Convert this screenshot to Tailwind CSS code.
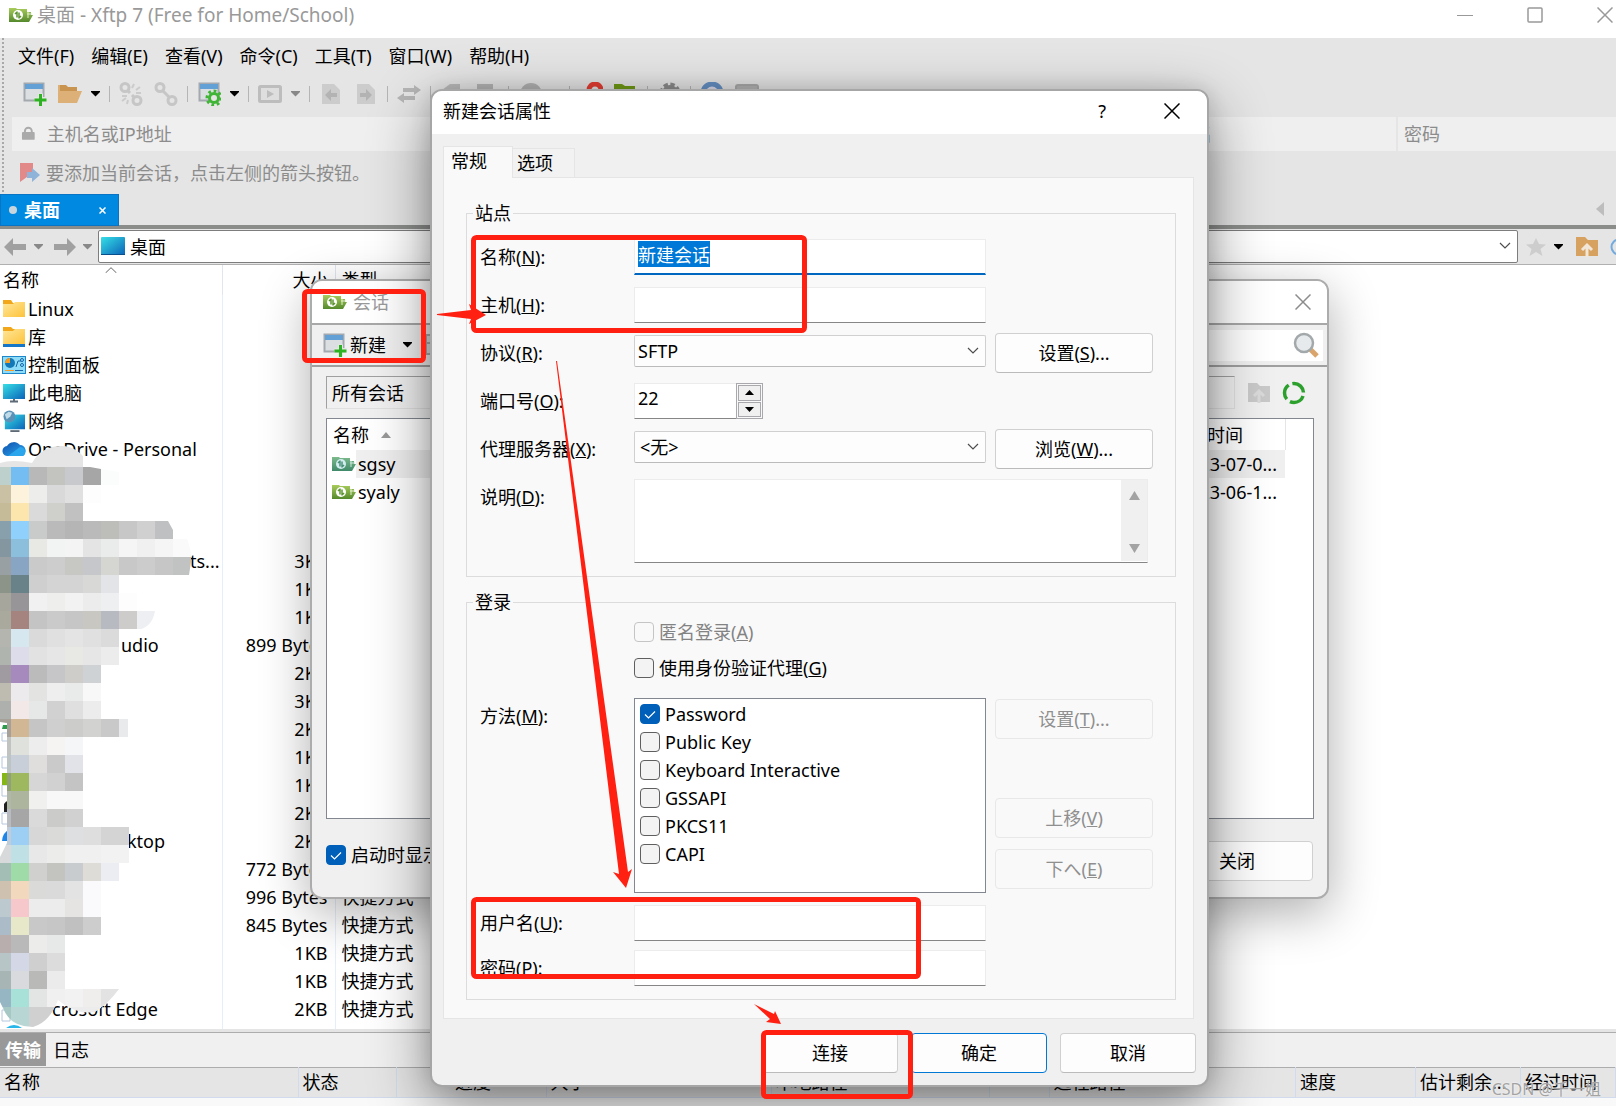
<!DOCTYPE html>
<html lang="zh-CN">
<head>
<meta charset="utf-8">
<title>桌面 - Xftp 7 (Free for Home/School)</title>
<script src="https://cdn.jsdelivr.net/npm/@tailwindcss/browser@4"></script>
</head>
<body class="relative h-screen overflow-hidden bg-[#e5e5e5] text-[18px] leading-6 text-black font-['Noto_Sans','Noto_Sans_CJK_SC',sans-serif]">

<!-- shared icons -->
<svg class="absolute h-0 w-0" aria-hidden="true">
  <defs>
    <linearGradient id="gGreen" x1="0" y1="0" x2="0" y2="1"><stop offset="0" stop-color="#a9cc5c"/><stop offset="1" stop-color="#54892b"/></linearGradient>
    <linearGradient id="gTeal" x1="0" y1="0" x2="0" y2="1"><stop offset="0" stop-color="#7dbb8c"/><stop offset="1" stop-color="#3f8a6a"/></linearGradient>
    <linearGradient id="gYellow" x1="0" y1="0" x2="1" y2="1"><stop offset="0" stop-color="#ffe79a"/><stop offset="1" stop-color="#fdc33b"/></linearGradient>
    <linearGradient id="gBlue" x1="0" y1="0" x2="1" y2="1"><stop offset="0" stop-color="#35dfe6"/><stop offset="1" stop-color="#0b63b8"/></linearGradient>
    <linearGradient id="gCloud" x1="0" y1="0" x2="1" y2="1"><stop offset="0" stop-color="#0f4fae"/><stop offset="1" stop-color="#2aa9ee"/></linearGradient>
  </defs>
  <symbol id="i-xftp" viewBox="0 0 24 16"><path d="M0 1h7l1 1h10v3h4v3h2l-4 7H0z" fill="url(#gGreen)"/><circle cx="9" cy="8" r="5" fill="#fff"/><path d="M8 4.500v6M8 5l-2 2M10 11.500v-6M10 11l2-2" stroke="#5d9431" stroke-width="1.500" fill="none"/><path d="M19 5v6M18 7h5" stroke="#e4f0cf" stroke-width="1"/></symbol>
  <symbol id="i-xftp-on" viewBox="0 0 24 16"><path d="M0 1h7l1 1h10v3h4v3h2l-4 7H0z" fill="url(#gTeal)"/><circle cx="9" cy="8" r="5" fill="#d3edf0"/><path d="M8 4.500v6M8 5l-2 2M10 11.500v-6M10 11l2-2" stroke="#4c9278" stroke-width="1.500" fill="none"/><path d="M19 5v6M18 7h5" stroke="#cfe8df" stroke-width="1"/></symbol>
  <symbol id="i-new" viewBox="0 0 24 24"><rect x="1.500" y="1.500" width="19" height="17" fill="#dcdfe2" stroke="#a3a9ae" stroke-width="2"/><rect x="2" y="2" width="18" height="5" fill="#62a0d6"/><path d="M17.500 11.500v12M11.500 17.500h12" stroke="#e5e5e5" stroke-width="5"/><path d="M17.500 12v12M11.500 18h12" stroke="#2db321" stroke-width="3"/></symbol>
  <symbol id="i-open" viewBox="0 0 24 24"><path d="M0 3h8l2 2h9v5H0z" fill="#c99450"/><path d="M0 21V3h2v6h22l-5 12z" fill="#dcb076"/></symbol>
  <symbol id="i-caret" viewBox="0 0 9 6"><path d="M0 0h9v1L4.500 5.500 0 1z" fill="currentColor"/></symbol>
  <symbol id="i-unlink" viewBox="0 0 24 24"><g fill="none" stroke="#c6c6c6" stroke-width="3"><circle cx="6" cy="5.500" r="4"/><circle cx="18" cy="18.500" r="4"/><path d="M8 8l3 3M13 13l3 3"/></g><path d="M13 6l2-4M17 8l4-3M17 11h5M3 14h5M3 19l4-3M8 22l1-4" stroke="#cbcbcb" stroke-width="2"/></symbol>
  <symbol id="i-link" viewBox="0 0 24 24"><g fill="none" stroke="#c6c6c6" stroke-width="3"><circle cx="6" cy="5.500" r="4"/><circle cx="18" cy="18.500" r="4"/><path d="M8 8l8 8"/></g></symbol>
  <symbol id="i-prop" viewBox="0 0 24 24"><rect x="2.500" y="1.500" width="19" height="17" fill="#dcdfe2" stroke="#a3a9ae" stroke-width="2"/><rect x="3" y="2" width="18" height="5" fill="#62a0d6"/><circle cx="17" cy="16" r="7" fill="none" stroke="#3fb535" stroke-width="3" stroke-dasharray="2.700 2.700"/><circle cx="17" cy="16" r="4.500" fill="#e5e5e5" stroke="#3fb535" stroke-width="3"/></symbol>
  <symbol id="i-play" viewBox="0 0 24 24"><rect x="1.500" y="4.500" width="21" height="15" rx="1" fill="#dedede" stroke="#bdbdbd" stroke-width="3"/><path d="M9 8v8l7-4z" fill="#bdbdbd"/></symbol>
  <symbol id="i-docl" viewBox="0 0 24 24"><path d="M3 2h12l6 6v14H3z" fill="#cccccc"/><path d="M6 13l6-6v4h6v4h-6v4z" fill="#b3b3b3"/></symbol>
  <symbol id="i-docr" viewBox="0 0 24 24"><path d="M3 2h12l6 6v14H3z" fill="#cccccc"/><path d="M18 13l-6-6v4H6v4h6v4z" fill="#b3b3b3"/></symbol>
  <symbol id="i-swap" viewBox="0 0 24 24"><path d="M6 6h11V3l7 5-7 5v-3H6zM18 14H7v-3l-7 5 7 5v-3h11z" fill="#b5b5b5"/></symbol>
  <symbol id="i-folderup" viewBox="0 0 24 24"><path d="M1 2h9l3 3h10v16H1z" fill="currentColor"/><path d="M12 22v-12M7 15l5-5 5 5" stroke="#f2e6d8" stroke-width="3" fill="none"/></symbol>
  <symbol id="i-folderup-off" viewBox="0 0 24 24"><path d="M1 2h9l3 3h10v16H1z" fill="#c9c9c9"/><path d="M12 22v-12M7 15l5-5 5 5" stroke="#dadada" stroke-width="3" fill="none"/></symbol>
  <symbol id="i-folder" viewBox="0 0 24 20"><path d="M1 1h8l2 3h12v13H1z" fill="#f2a71b"/><path d="M1 5h10l2-2h10v15H1z" fill="url(#gYellow)"/></symbol>
  <symbol id="i-lib" viewBox="0 0 24 20"><path d="M1 0h8l2 2h12v13H1z" fill="#f2a71b"/><path d="M1 4h10l2-2h10v15H1z" fill="url(#gYellow)"/><path d="M1 17h22v3H1z" fill="#1676c8"/></symbol>
  <symbol id="i-panel" viewBox="0 0 24 20"><rect x=".500" y="1.500" width="23" height="17" fill="#8fdcf8" stroke="#1d87c9"/><circle cx="8" cy="8" r="5" fill="#1477b8"/><path d="M8 8V3a5 5 0 0 0-5 5z" fill="#f59a23"/><path d="M14 12l2-6h3" stroke="#1565a8" fill="none"/><circle cx="20" cy="5" r="1.500" fill="none" stroke="#1565a8"/><circle cx="20" cy="10" r="1.500" fill="none" stroke="#1565a8"/><path d="M3 15.500h9" stroke="#f59a23"/><path d="M13 15.500h8" stroke="#1565a8"/></symbol>
  <symbol id="i-pc" viewBox="0 0 24 20"><rect x="1" y="1" width="22" height="15" fill="url(#gBlue)"/><path d="M8 18.500h8M12 16v2" stroke="#5d6a75" stroke-width="2"/></symbol>
  <symbol id="i-net" viewBox="0 0 24 24"><rect x="2" y="5" width="22" height="16" fill="url(#gBlue)"/><path d="M8 23h10" stroke="#5d6a75" stroke-width="2"/><circle cx="7" cy="7" r="6.500" fill="#5b93b8"/><path d="M2 5l4-3 4 1-2 4-4 3z" fill="#c2dbe8"/></symbol>
  <symbol id="i-cloud" viewBox="0 0 24 18"><path d="M6 16a5 5 0 0 1-1-10 8 8 0 0 1 13-1 6 6 0 0 1 3 11z" fill="url(#gCloud)"/><path d="M6 16l12-9a5 5 0 0 1 3 9z" fill="#2ba6ec"/></symbol>
  <symbol id="i-desktop" viewBox="0 0 24 18"><rect width="24" height="18" rx="1" fill="url(#gBlue)"/><path d="M0 17.500h24" stroke="#084f8c"/></symbol>
  <symbol id="i-chev" viewBox="0 0 12 8"><path d="M1 1l5 5 5-5" fill="none" stroke="#4d4d4d" stroke-width="1.200"/></symbol>
  <symbol id="i-tick" viewBox="0 0 20 20"><path d="M5 10.500l3.500 3.500L15 7.500" fill="none" stroke="#fff" stroke-width="1.200"/></symbol>
  <symbol id="i-x" viewBox="0 0 16 16"><path d="M.500 .500l15 15M15.500 .500l-15 15" stroke="currentColor" stroke-width="1.500"/></symbol>
</svg>

<main class="flex h-full flex-col">
  <header class="flex h-[38px] shrink-0 items-center bg-white pb-2 pl-[9px] text-[#999]">
    <svg class="mr-1 h-4 w-6"><use href="#i-xftp"/></svg>
    <h1 class="flex-1 text-[19px] whitespace-nowrap">桌面 - Xftp 7 (Free for Home/School)</h1>
    <div class="flex items-center gap-[54px] pr-[3px]">
      <button aria-label="最小化"><svg class="h-4 w-4" viewBox="0 0 16 16"><path d="M0 8.500h16" stroke="#999"/></svg></button>
      <button aria-label="最大化"><svg class="h-4 w-4" viewBox="0 0 16 16"><rect x="1" y="1" width="14" height="14" rx="1" fill="none" stroke="#999" stroke-width="1.500"/></svg></button>
      <button aria-label="关闭窗口"><svg class="h-4 w-4"><use href="#i-x"/></svg></button>
    </div>
  </header>

  <div class="flex shrink-0">
    <div class="ml-0.5 w-0.5 shrink-0 bg-[repeating-linear-gradient(#a8a8a8_0_2px,transparent_2px_4px)]"></div>
    <div class="min-w-0 flex-1">
      <nav class="flex h-[36px] items-center gap-[17px] pl-[14px]">
        <button>文件(F)</button><button>编辑(E)</button><button>查看(V)</button><button>命令(C)</button><button>工具(T)</button><button>窗口(W)</button><button>帮助(H)</button>
      </nav>
      <div class="flex h-[43px] items-center pb-1 pl-[10px]" role="toolbar" id="toolbar"></div>
      <div class="flex h-[34px] gap-0.5 pl-2">
        <label class="flex flex-1 items-center bg-[#efefef] pl-[9px]">
          <svg class="mr-[11px] h-4 w-[15px]" viewBox="0 0 15 16"><path d="M4 8V5a3.500 3.500 0 0 1 7 0v3" fill="none" stroke="#aaa" stroke-width="2"/><rect x="1" y="6" width="13" height="8" rx="1" fill="#aaa"/></svg>
          <input aria-label="主机名或IP地址" placeholder="主机名或IP地址" class="w-full bg-transparent outline-none placeholder:text-[#8c8c8c]">
        </label>
        <input aria-label="用户名" placeholder="用户名" class="w-[248px] bg-[#efefef] px-[10px] outline-none placeholder:text-[#8c8c8c]">
        <input aria-label="密码" placeholder="密码" class="w-[218px] bg-[#efefef] px-[6px] outline-none placeholder:text-[#8c8c8c]">
      </div>
      <div class="flex h-[43px] items-center gap-[6px] pl-4 text-[#8c8c8c]">
        <svg class="h-5 w-5" viewBox="0 0 20 20"><path d="M0 0h13v10l-6 4-7 5z" fill="#e28a8a"/><path d="M7 9h5V5l8 7-8 7v-4H7z" fill="#8fb3d9"/></svg>
        <p>要添加当前会话，点击左侧的箭头按钮。</p>
      </div>
    </div>
  </div>

  <div class="flex h-[35px] shrink-0 items-start justify-between border-b-4 border-[#8b8d8b]">
    <div class="flex h-8 w-[119px] items-center border border-[#0a74c4] bg-[#0089e0] pr-3 pl-2 font-bold text-white">
      <span class="mr-[7px] h-2 w-2 rounded-full bg-[#c9d5dd]"></span><span class="flex-1">桌面</span>
      <button aria-label="关闭标签"><svg class="h-[7px] w-[7px]" viewBox="0 0 7 7"><path d="M.500 .500l6 6M6.500 .500l-6 6" stroke="#fff" stroke-width="1.500"/></svg></button>
    </div>
    <button aria-label="向左滚动" class="mt-2 mr-3"><svg class="h-[14px] w-2" viewBox="0 0 8 14"><path d="M8 0v14L0 7z" fill="#bdbdbd"/></svg></button>
  </div>

  <div class="flex h-9 shrink-0 items-center border-b border-[#b0b0b0] text-[#a3a3a3]">
    <button aria-label="后退" class="ml-1"><svg class="h-[18px] w-[22px]" viewBox="0 0 22 18"><path d="M0 9l9-9v6h13v6H9v6z" fill="#a0a0a0"/></svg></button>
    <button aria-label="后退历史" class="ml-2 text-[#888]"><svg class="h-[6px] w-[9px]"><use href="#i-caret"/></svg></button>
    <button aria-label="前进" class="ml-[11px]"><svg class="h-[18px] w-[22px]" viewBox="0 0 22 18"><path d="M22 9l-9-9v6H0v6h13v6z" fill="#a0a0a0"/></svg></button>
    <button aria-label="前进历史" class="ml-[7px] text-[#888]"><svg class="h-[6px] w-[9px]"><use href="#i-caret"/></svg></button>
    <div class="relative ml-[6px] h-[33px] min-w-0 flex-1 text-black">
      <select aria-label="位置" class="h-full w-full appearance-none rounded-xs border border-[#7d7d7d] bg-white pl-[31px]"><option>桌面</option></select>
      <svg class="pointer-events-none absolute top-[7px] left-[3px] h-[18px] w-6"><use href="#i-desktop"/></svg>
      <svg class="pointer-events-none absolute top-3 right-[7px] h-2 w-3"><use href="#i-chev"/></svg>
    </div>
    <button aria-label="收藏" class="ml-2"><svg class="h-[18px] w-5" viewBox="0 0 20 18"><path d="M10 0l3 6 7 .500-5.500 4.500 2 7-6.500-4-6.500 4 2-7L0 6.500 7 6z" fill="#cdcdcd"/></svg></button>
    <button aria-label="收藏列表" class="ml-2 text-black"><svg class="h-[6px] w-[9px]"><use href="#i-caret"/></svg></button>
    <button aria-label="上一级" class="ml-3 text-[#d7a25f]"><svg class="h-6 w-6"><use href="#i-folderup"/></svg></button>
    <button aria-label="刷新" class="ml-[11px] w-[6px] overflow-hidden"><svg class="h-[18px] w-5" viewBox="0 0 20 18"><circle cx="9" cy="9" r="7.500" fill="none" stroke="#73abe0" stroke-width="2"/></svg></button>
  </div>

  <section class="relative min-h-0 flex-1 overflow-hidden bg-white">
    <table class="w-full table-fixed border-collapse">
      <colgroup><col class="w-[222px]"><col class="w-[113px]"><col></colgroup>
      <thead><tr class="h-[30px] text-left">
        <th class="border-r border-[#e0e6ee] pl-[3px] font-normal">名称</th>
        <th class="border-r border-[#e0e6ee] pr-[6px] text-right font-normal">大小</th>
        <th class="pl-[6px] font-normal">类型</th></tr></thead>
      <tbody id="files"></tbody>
    </table>
    <svg class="absolute top-[2px] left-[105px] h-[6px] w-3" viewBox="0 0 12 6"><path d="M.500 6L6 .700 11.500 6" fill="none" stroke="#666"/></svg>
    <svg class="absolute top-0 left-0 h-[763px] w-[230px]" viewBox="0 265 230 763" aria-hidden="true">
      <defs><clipPath id="blot"><path d="M0 463Q12 459 32 463Q42 446 61 446Q80 446 90 467L101 469L119 472V485H101V521L168 521L173 530V539H187Q192 551 191 562L189 575H155V611Q152 628 137 630Q122 629 121 634L123 665H128V737H90V827H129V863H119V881H101V989H119Q108 1004 95 1012Q75 1015 58 1000Q50 1022 33 1027Q10 1027 3 1008L0 1002V857L7 843V723L0 722Z"/></clipPath></defs>
      <path d="M2 733h8v8H2zM2 757h8v11H2zM2 785h8v11H2zM2 813h8v11H2zM2 1010h8v11H2z" fill="#fff" stroke="#b5c8dc"/>
      <path d="M2 773h8v12H2z" fill="#84b716"/><path d="M2 841a14 14 0 0 1 8-12v12z" fill="#1d86e8"/><path d="M3 725h5v4H2z" fill="#2a9c4c"/><path d="M4 812v-8q4-6 6 0v8z" fill="#222"/><path d="M6 1028q8-6 16 0z" fill="#29b6e8"/>
      <g id="mosaic" clip-path="url(#blot)" shape-rendering="crispEdges"></g>
    </svg>
  </section>

  <footer class="shrink-0 border-t-[3px] border-[#e5e5e5] bg-[#f9f9f9]">
    <div class="flex h-[35px] border-t border-[#adadad] bg-[#f0f0f0] pb-px" role="tablist">
      <button role="tab" aria-selected="true" class="w-[46px] bg-[#999] font-bold text-white">传输</button>
      <button role="tab" class="pl-[7px]">日志</button>
    </div>
    <table class="w-full table-fixed border-collapse border-y border-t-[#adadad] border-b-[#d0dced] bg-[#e5e5e5]">
      <colgroup><col class="w-[298px]"><col class="w-[98px]"><col class="w-[150px]"><col class="w-[225px]"><col class="w-[218px]"><col class="w-[60px]"><col><col class="w-[120px]"><col class="w-[105px]"><col class="w-[95px]"></colgroup>
      <thead><tr class="h-[30px] text-left whitespace-nowrap [&>th]:border-r [&>th]:border-[#d0dced] [&>th]:pb-px [&>th]:pl-1 [&>th]:font-normal">
        <th>名称</th><th>状态</th><th class="text-center">进度</th><th>大小</th><th>本地路径</th><th class="text-center">&lt;-&gt;</th><th>远程路径</th><th>速度</th><th>估计剩余...</th><th>经过时间</th></tr></thead>
    </table>
    <div class="h-2"></div>
  </footer>
</main>

<!-- session manager window -->
<section role="dialog" aria-label="会话" class="absolute top-[279px] left-[310px] flex w-[1019px] flex-col overflow-hidden rounded-xl border-2 border-[#acacac] bg-[#f0f0f0] shadow-[0_14px_50px_rgba(0,0,0,0.32)]">
  <header class="flex h-11 items-center border-b-2 border-[#a8a8a8] bg-white pr-4 pb-px pl-[11px] text-[#999]">
    <svg class="mr-[6px] h-4 w-6"><use href="#i-xftp"/></svg><h2 class="flex-1">会话</h2>
    <button aria-label="关闭会话" class="text-[#8c8c8c]"><svg class="h-4 w-4"><use href="#i-x"/></svg></button>
  </header>
  <div class="flex h-[42px] items-center border-b-2 border-[#a0a0a0] pr-1 pl-[11px]" role="toolbar">
    <button class="flex items-center gap-[3px]"><svg class="h-6 w-6"><use href="#i-new"/></svg>新建<svg class="ml-[13px] h-[6px] w-[11px]"><use href="#i-caret"/></svg></button>
    <svg class="ml-3 h-6 w-6" viewBox="0 0 24 24"><rect x="1" y="2" width="20" height="19" fill="#ddd" stroke="#aaa" stroke-width="2"/><path d="M1 10h20" stroke="#aaa" stroke-width="2"/></svg>
    <span class="flex-1"></span>
    <label class="flex h-[31px] w-[300px] items-center bg-white pr-1">
      <input aria-label="搜索会话" class="min-w-0 flex-1 outline-none">
      <svg class="h-[26px] w-[26px]" viewBox="0 0 26 26"><path d="M17 17l7 7" stroke="#d9a56c" stroke-width="5"/><circle cx="11" cy="11" r="9" fill="#e6eaec" stroke="#a3a8ab" stroke-width="2.500"/></svg>
    </label>
  </div>
  <div class="flex items-center pt-[9px] pl-[14px]">
    <div class="flex h-[33px] w-[909px] items-center border border-[#e0e0e0] border-t-[#a0a0a0] border-l-[#a0a0a0] pl-[5px]">所有会话</div>
    <button aria-label="上一级文件夹" class="ml-3"><svg class="h-6 w-6"><use href="#i-folderup-off"/></svg></button>
    <button aria-label="刷新列表" class="ml-[11px]"><svg class="h-6 w-6" viewBox="0 0 24 24"><circle cx="12" cy="12" r="9.500" fill="none" stroke="#2ca02c" stroke-width="3.500" stroke-dasharray="16 3.900" stroke-dashoffset="-3"/></svg></button>
  </div>
  <div class="mt-[9px] mr-[13px] ml-[14px] h-[401px] border border-[#828790] bg-white">
    <table class="w-[958px] table-fixed border-collapse text-left whitespace-nowrap">
      <colgroup><col class="w-[838px]"><col class="w-[120px]"></colgroup>
      <thead><tr class="h-[31px]"><th class="pl-[6px] font-normal"><span class="flex items-center gap-3">名称<svg class="h-[6px] w-[10px]" viewBox="0 0 10 6"><path d="M5 0l5 6H0z" fill="#999"/></svg></span></th><th class="border-r border-[#e5e5e5] pl-[6px] font-normal">修改时间</th></tr></thead>
      <tbody>
        <tr class="h-7"><td class="bg-[linear-gradient(90deg,transparent_29px,#efefef_29px)] pl-[5px]"><span class="flex items-center gap-[2px]"><svg class="h-4 w-6"><use href="#i-xftp-on"/></svg>sgsy</span></td><td class="bg-[#efefef] pr-2 text-right">2023-07-0...</td></tr>
        <tr class="h-7"><td class="pl-[5px]"><span class="flex items-center gap-[2px]"><svg class="h-4 w-6"><use href="#i-xftp"/></svg>syaly</span></td><td class="pr-2 text-right">2023-06-1...</td></tr>
      </tbody>
    </table>
  </div>
  <div class="flex items-start justify-between pt-[22px] pr-[14px] pb-4 pl-[14px]">
    <label class="flex h-7 items-center gap-[5px]"><span class="relative h-5 w-5"><input type="checkbox" checked class="peer block h-5 w-5 appearance-none rounded border border-[#5f5f5f] bg-[#f3f3f3] checked:border-[#005fb8] checked:bg-[#005fb8]"><svg class="pointer-events-none absolute inset-0 hidden h-5 w-5 peer-checked:block"><use href="#i-tick"/></svg></span>启动时显示</label>
    <button class="h-10 w-[152px] rounded border border-[#d0d0d0] bg-[#fdfdfd]">关闭</button>
  </div>
</section>

<!-- new session properties window -->
<section role="dialog" aria-label="新建会话属性" class="absolute top-[89px] left-[430px] w-[779px] overflow-hidden rounded-xl border-2 border-[#a6a6a6] bg-[#f0f0f0] shadow-[0_20px_60px_rgba(0,0,0,0.45),0_0_20px_rgba(0,0,0,0.12)]">
  <header class="flex h-[43px] items-center bg-white pr-[27px] pb-[3px] pl-[11px]">
    <h2 class="flex-1">新建会话属性</h2>
    <button aria-label="帮助" class="mr-[58px]">?</button>
    <button aria-label="关闭"><svg class="h-4 w-4"><use href="#i-x"/></svg></button>
  </header>
  <form class="pt-3 pr-[11px] pb-3 pl-[11px]" onsubmit="return false">
    <div class="relative z-10 -mb-px flex items-end" role="tablist">
      <button type="button" role="tab" aria-selected="true" class="flex h-8 w-[70px] items-start border border-b-0 border-[#e5e5e5] bg-[#f9f9f9] pt-[2px] pl-[7px]">常规</button>
      <button type="button" role="tab" class="mb-px h-[29px] w-[62px] border border-b-0 border-l-0 border-[#e5e5e5] bg-[#f2f2f2] pl-1 text-left leading-7">选项</button>
    </div>
    <div class="mr-0.5 border border-[#e5e5e5] bg-[#f9f9f9] pt-[23px] pr-[17px] pb-[18px] pl-[22px]">
      <fieldset class="min-w-0 border border-[#dcdcdc] pt-2 pb-[13px] pl-[13px]">
        <legend class="-ml-[7px] px-[2px]">站点</legend>
        <div class="grid auto-rows-[48px] grid-cols-[154px_352px_158px] [&>label]:pt-3">
          <label for="name">名称(<u>N</u>):</label>
          <div class="col-span-2 pt-[6px]"><input id="name" value="新建会话" class="h-9 w-[352px] border border-b-2 border-[#ececec] border-b-[#0067c0] bg-white px-[3px] pb-[6px] outline-none selection:bg-[#0078d7] selection:text-white"></div>
          <label for="host">主机(<u>H</u>):</label>
          <div class="col-span-2 pt-[6px]"><input id="host" class="h-9 w-[352px] border border-[#ececec] border-b-[#868686] bg-white px-[3px] pb-[6px] outline-none"></div>
          <label for="proto">协议(<u>R</u>):</label>
          <div class="pt-[6px]"><div class="relative"><select id="proto" class="h-8 w-full appearance-none rounded-xs border border-[#d0d0d0] border-b-[#bbb] bg-[#fdfdfd] pl-[3px]"><option>SFTP</option></select><svg class="pointer-events-none absolute top-3 right-[7px] h-2 w-3"><use href="#i-chev"/></svg></div></div>
          <div class="-mr-[9px] pt-1 pl-[9px]"><button type="button" class="h-10 w-full rounded border border-[#d0d0d0] border-b-[#bbb] bg-[#fdfdfd]">设置(<u>S</u>)...</button></div>
          <label for="port">端口号(<u>O</u>):</label>
          <div class="col-span-2 flex pt-[6px]">
            <input id="port" value="22" class="h-9 w-[102px] border border-r-0 border-[#ececec] border-b-[#868686] bg-white px-[3px] pb-[6px] outline-none">
            <div class="flex h-9 w-[27px] flex-col gap-px border border-[#a9a9ad] bg-[#f9f9f9] p-px">
              <button type="button" aria-label="增加" class="grid flex-1 place-items-center border border-[#a9a9ad] bg-[#f0f0f0]"><svg class="h-[5px] w-[9px]" viewBox="0 0 9 5"><path d="M4.500 0L9 5H0z"/></svg></button>
              <button type="button" aria-label="减少" class="grid flex-1 place-items-center border border-[#a9a9ad] bg-[#f0f0f0]"><svg class="h-[5px] w-[9px]" viewBox="0 0 9 5"><path d="M4.500 5L9 0H0z"/></svg></button>
            </div>
          </div>
          <label for="proxy">代理服务器(<u>X</u>):</label>
          <div class="pt-[6px]"><div class="relative"><select id="proxy" class="h-8 w-full appearance-none rounded-xs border border-[#d0d0d0] border-b-[#bbb] bg-[#fdfdfd] pl-[5px]"><option>&lt;无&gt;</option></select><svg class="pointer-events-none absolute top-3 right-[7px] h-2 w-3"><use href="#i-chev"/></svg></div></div>
          <div class="-mr-[9px] pt-1 pl-[9px]"><button type="button" class="h-10 w-full rounded border border-[#d0d0d0] border-b-[#bbb] bg-[#fdfdfd]">浏览(<u>W</u>)...</button></div>
        </div>
        <div class="grid grid-cols-[154px_514px]">
          <label for="desc" class="pt-3">说明(<u>D</u>):</label>
          <div class="mt-[6px] flex h-[84px] border border-[#ececec] border-b-[#868686] bg-white">
            <textarea id="desc" class="flex-1 resize-none outline-none"></textarea>
            <div class="mb-px flex w-[26px] flex-col items-center justify-between bg-[#f0f0f0] pt-[11px] pb-2">
              <svg class="h-[9px] w-[11px]" viewBox="0 0 11 9"><path d="M5.500 0L11 9H0z" fill="#a3a3a3"/></svg>
              <svg class="h-[9px] w-[11px]" viewBox="0 0 11 9"><path d="M5.500 9L11 0H0z" fill="#a3a3a3"/></svg>
            </div>
          </div>
        </div>
      </fieldset>

      <fieldset class="mt-[13px] min-w-0 border border-[#dcdcdc] pb-[13px] pl-[13px]">
        <legend class="-ml-[7px] px-[2px]">登录</legend>
        <div class="pl-[154px]">
          <label class="flex h-9 items-center gap-[5px] text-[#838383]"><input type="checkbox" disabled class="h-5 w-5 appearance-none rounded border border-[#c5c5c5] bg-[#f9f9f9]"><span>匿名登录(<u>A</u>)</span></label>
          <label class="flex h-9 items-center gap-[5px]"><input type="checkbox" class="h-5 w-5 appearance-none rounded border border-[#5f5f5f] bg-[#f3f3f3]"><span>使用身份验证代理(<u>G</u>)</span></label>
        </div>
        <div class="mt-3 grid grid-cols-[154px_352px_167px]">
          <span id="mlabel" class="pt-[6px]">方法(<u>M</u>):</span>
          <div role="group" aria-labelledby="mlabel" id="methods" class="h-[195px] border border-[#828790] bg-white pt-px pl-[5px]"></div>
          <div class="flex flex-col pt-px pl-[9px] text-[#8f8f8f]">
            <button type="button" disabled class="h-10 rounded border border-[#e8e8e8]">设置(<u>T</u>)...</button>
            <button type="button" disabled class="mt-[59px] h-10 rounded border border-[#e8e8e8]">上移(<u>V</u>)</button>
            <button type="button" disabled class="mt-[11px] h-10 rounded border border-[#e8e8e8]">下へ(<u>E</u>)</button>
          </div>
        </div>
        <div class="mt-3 grid grid-cols-[154px_352px] items-center gap-y-[9px]">
          <label for="user">用户名(<u>U</u>):</label><input id="user" class="h-9 border border-[#ececec] border-b-[#868686] bg-white px-[3px] pb-[6px] outline-none">
          <label for="pass">密码(<u>P</u>):</label><input id="pass" type="password" class="h-9 border border-[#ececec] border-b-[#868686] bg-white px-[3px] pb-[6px] outline-none">
        </div>
      </fieldset>
    </div>
    <div class="mt-[14px] flex justify-end gap-[13px]">
      <button type="button" class="h-10 w-[136px] rounded border border-[#d0d0d0] border-b-[#bbb] bg-[#fdfdfd]">连接</button>
      <button type="submit" class="h-10 w-[136px] rounded border border-[#0078d4] bg-[#fdfdfd]">确定</button>
      <button type="button" class="h-10 w-[136px] rounded border border-[#d0d0d0] border-b-[#bbb] bg-[#fdfdfd]">取消</button>
    </div>
  </form>
</section>

<!-- red call-outs -->
<svg class="pointer-events-none absolute inset-0 h-full w-full" aria-hidden="true">
  <g fill="none" stroke="#ff2012" stroke-width="5">
    <rect x="304.500" y="291.500" width="119" height="69" rx="3"/>
    <rect x="473.500" y="237.500" width="331" height="93" rx="3"/>
    <rect x="473.500" y="899.500" width="445" height="77" rx="3"/>
    <rect x="763.500" y="1032.500" width="147" height="64" rx="3"/>
  </g>
  <g fill="#ff2012">
    <path d="M437 314L471 310 469 304 486 315 469 324 471 319 437 315z"/>
    <path d="M556 361h1L628 872 632 869 626 888 613 872 619 874z"/>
    <path d="M754 1004L774 1014 775 1011 781 1024 766 1022 770 1019z"/>
  </g>
</svg>
<p class="absolute right-[15px] bottom-[5px] text-base whitespace-nowrap text-[#a3a3a3] [text-shadow:0_0_2px_#fff]">CSDN @千一姐</p>

<script>
const icon = (id, cls = 'h-6 w-6') => `<svg class="${cls}"><use href="#${id}"/></svg>`;
const raw = s => `<svg class="h-6 w-6" viewBox="0 0 24 24">${s}</svg>`;
const caret = (cls = 'text-black') => `<button aria-label="更多" class="-ml-[2px] ${cls}">${icon('i-caret', 'h-[6px] w-[9px]')}</button>`;
const btn = s => `<button>${s}</button>`;
const groups = [
  [btn(icon('i-new')), btn(icon('i-open')), caret()],
  [btn(icon('i-unlink')), btn(icon('i-link'))],
  [btn(icon('i-prop')), caret()],
  [btn(icon('i-play')), caret('text-[#888]')],
  [btn(icon('i-docl')), btn(icon('i-docr'))],
  [btn(icon('i-swap'))],
  [btn(raw('<path d="M2 8l8-6h10v20H4z" fill="#bbb"/>')), btn(raw('<path d="M2 2h16v20H2z" fill="#b5b5b5"/>'))],
  [btn(raw('<circle cx="13" cy="12" r="11" fill="#b3b3b3"/>')), caret()],
  [btn(raw('<circle cx="16" cy="8" r="6" fill="none" stroke="#e53d33" stroke-width="5"/>')), btn(raw('<path d="M0 2h8l3 2h10v17H0z" fill="#6f9a14"/><circle cx="11" cy="12" r="5" fill="#fff"/>'))],
  [btn(raw('<circle cx="13" cy="11" r="8" fill="none" stroke="#8c8c8c" stroke-width="5" stroke-dasharray="4 2.300"/><circle cx="13" cy="11" r="6" fill="none" stroke="#8c8c8c" stroke-width="4"/>'))],
  [btn(raw('<circle cx="12" cy="11" r="9" fill="#dde" stroke="#6590c4" stroke-width="5"/>')), btn(raw('<rect x="1" y="3" width="22" height="16" rx="2" fill="#b5b5b5" stroke="#aaa" stroke-width="2"/>'))]
];
document.getElementById('toolbar').innerHTML = groups.map((g, i) =>
  `<div class="${i ? "relative flex h-6 items-center gap-[11px] pr-[9px] pl-[10px] before:absolute before:left-0 before:h-4 before:w-px before:bg-[#b5b5b5]" : 'flex h-6 items-center gap-[11px] pr-[9px] pl-[9px]'}">${g.join('')}</div>`).join('');

const names = [['i-folder','Linux'],['i-lib','库'],['i-panel','控制面板'],['i-pc','此电脑'],['i-net','网络'],['i-cloud','OneDrive - Personal'],
  0,0,0,['','ts...','pl-[190px]'],0,0,['','udio','pl-[121px]'],0,0,0,0,0,0,['','ktop','pl-[127px]'],0,0,0,0,0,['','crosoft Edge','pl-[52px]']];
const sizes = ['3KB','1KB','1KB','899 Bytes','2KB','3KB','2KB','1KB','1KB','2KB','2KB','772 Bytes','996 Bytes','845 Bytes','1KB','1KB','2KB'];
document.getElementById('files').innerHTML = Array.from({length: 27}, (_, i) => {
  const n = names[i], s = sizes[i - 9] || '';
  const label = !n ? '' : n[0] ? `<span class="flex items-center gap-[2px] pl-[2px]">${icon(n[0], 'h-[22px] w-6')}${n[1]}</span>` : `<span class="block ${n[2]}">${n[1]}</span>`;
  return `<tr class="h-7 whitespace-nowrap"><td class="border-r border-[#e5effa]">${label}</td><td class="border-r border-[#e5effa] pr-[7px] text-right">${s}</td><td class="pl-[6px]">${s && '快捷方式'}</td></tr>`;
}).join('');

document.getElementById('methods').innerHTML = ['Password','Public Key','Keyboard Interactive','GSSAPI','PKCS11','CAPI'].map((m, i) =>
  `<label class="flex h-7 items-center gap-[5px]"><span class="relative h-5 w-5"><input type="checkbox" ${i ? '' : 'checked'} class="peer block h-5 w-5 appearance-none rounded border border-[#5f5f5f] bg-[#f3f3f3] checked:border-[#005fb8] checked:bg-[#005fb8]"><svg class="pointer-events-none absolute inset-0 hidden h-5 w-5 peer-checked:block"><use href="#i-tick"/></svg></span>${m}</label>`).join('');

const cells = `e5e5e5 e5e5e5 e5e5e5 e5e5e5 e5e5e5
bdd0cb 73bdf2 b8b8b8 c3c3bf c8c9cc a6a6a6 fafdfc
cac1a4 fdf2dc ededec d9d9d9 e0e0e0 fdfdfd
c5bb98 fde6ae dadada cfcfcc c1c1c1
87a0ab 8fd0fc c9cbca bababa b5b5b5 bababa bdbdb9 c7c7c7 d0d0d0 bfc0c2
8496a0 8cbfdc e8e8e5 f1f4f3 f4f4f4 e4e4e4 eaecec f5f5f5 f0f0f0 f5f5f5 fafafa
99a0a3 89a5c4 cacacb cdcdcd c7c8c4 c6c7cb d5d6d2 c8c8c8 cccccc c6c6c6 c1c3c2
8c9389 69828a cfcfd0 d4d4d4 d4d4d4 d8d8d7 e3e4e7
a6a69c 979597 f0f1f0 eeeeec f2f2f2 ececec eeeff1 fdfdfd
aaa99d a58480 c4c4c4 cacaca c6c6c6 c8c7c2 b7bac1 cdccca eeeff2
b3b5ae d7e7ef dadada e0e0e0 e4e4e4 e0e0e0 dbdbdb
b0b4ae dddcea e2e2e2 e6e6e6 e8e8e5 e6e6e6 ececec
a09ba0 a78abd bbbbbb c6c6c8 cecdca cfd2d4
bebbb0 eceaec e3e3e1 eeeeee e9ebea f8f8f8
aeb0ad f2e8e7 e5e8e7 d1d1d1 dfdfdf ececec
a5a098 d2b794 c5c5c5 cfcfcf ccccca d2d2d0 c9c9c9 e8eaec
c0c3bf dfe1dc ededed f6f4f2 f5f6f8
bcc4c4 c8cfd9 dfdedc cacaca e2e3e8
8fa07a 9eb85f d6d6d6 d1d1d1 c4c4c4
b0b8a8 aeb59e f0f0ee f8f8f8 f8f8f8
b8bcc0 a6a6a6 dadada cbcbca d1d1d1
c0ccd8 9dcef4 d7d7d7 dadad8 dddfe0 dedede d4d4d4 d4d4d4
d7d9da bfe1e6 e8e8e8 ececea f0f0f0 f0f0f0 f2f2f2 f2f2f2
a3bfb5 9edba8 d0d0ce c3c4c0 c9cccf dddcd7 ecedf2
cfc1b0 f2d8bd dadbd8 d9dad9 e3e3e3 fafafc
bccad0 f6c8cc ececec ececec e5e4e2 fafafc
abbcc8 e6e8c9 c8c8c8 c6c6c6 c0c0c0 cccdcc
b8aeae b8b9b8 ececea e6e9e8
b7c5c7 d4d7e6 cfcfcf dcdcdc
a7b5b4 d8dadd b9bab7 ebebeb
95b6c2 a8e1d8 e3e4e4 f0f0f0 f2f2f2 f0eeec e3e3e3
a5c8c5 b8d7d4 d0d0d0 d0d0d0 ececec ececec
a5c8c5 b8d7d4 d0d0d0`.split('\n');
document.getElementById('mosaic').innerHTML = cells.map((row, r) => row.split(' ').map((c, i) =>
  `<rect x="${i * 18 - 7}" y="${r ? 449 + r * 18 : 440}" width="18" height="${r ? 18 : 27}" fill="#${c}"/>`).join('')).join('');

const nameField = document.getElementById('name');
nameField.focus();
nameField.select();
</script>
</body>
</html>
